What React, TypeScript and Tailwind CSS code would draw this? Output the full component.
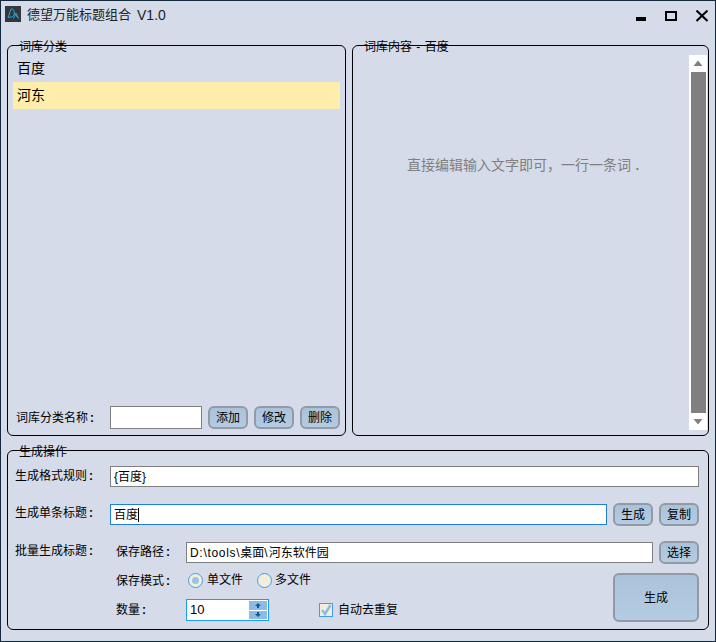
const font = "font-['Liberation_Sans','Noto_Sans_CJK_SC',sans-serif]";

function Btn({ label, className = "w-10 h-[23px]" }: { label: string; className?: string }) {
  return (
    <button className={`${className} shrink-0 rounded-md border-2 border-[#929ba5] bg-[linear-gradient(#abc3da,#b3cce3)] text-[12px] leading-none text-black`}>
      {label}
    </button>
  );
}

function Group({ title, className, children }: { title: React.ReactNode; className: string; children: React.ReactNode }) {
  return (
    <div className={`relative rounded-md border border-black ${className}`}>
      <span className="absolute left-[11px] top-[-6px] text-[12px] leading-[14px] text-black">{title}</span>
      {children}
    </div>
  );
}

function Field({ value, className, caret }: { value: React.ReactNode; className: string; caret?: boolean }) {
  return (
    <div className={`flex items-center bg-white pl-[3px] text-[12px] text-black ${className}`}>
      {value}
      {caret && <span className="h-[14px] w-px bg-black" />}
    </div>
  );
}

function Label({ text, className }: { text: string; className: string }) {
  return (
    <span className={`shrink-0 text-[12px] ${className}`}>
      {text}
      <span className="ml-[2px] font-bold">:</span>
    </span>
  );
}

export default function App() {
  const items = ["百度", "河东"];

  return (
    <div className={`${font} flex h-[642px] w-[716px] flex-col overflow-hidden border border-[#12293b] bg-[#d5dbe9] text-black`}>
      {/* title bar */}
      <div className="flex h-[29px] shrink-0 items-center pl-[4px]">
        <svg width="16" height="16" viewBox="0 0 16 16" className="mb-[4px]">
          <rect width="16" height="16" fill="#33373c" />
          <path d="M3 12 L6 3 L7.5 3 C10 4 10 9 7.5 10.5 L3.5 11.5 M8.5 12.5 L11 7 L13.5 12.5 M9 6.5 L13 12" fill="none" stroke="#2aa3d8" strokeWidth="1" />
        </svg>
        <span className="mb-[1px] ml-[6px] text-[13px] text-[#222]">德望万能标题组合</span>
        <span className="mb-[1px] ml-[6px] text-[14px] text-[#222]">V1.0</span>
        <div className="ml-auto flex items-center">
          <svg width="12" height="12" viewBox="0 0 12 12" className="mr-[17px]">
            <rect x="0" y="7" width="10" height="4" fill="#000" />
          </svg>
          <svg width="12" height="12" viewBox="0 0 12 12" className="mr-[19px]">
            <rect x="1" y="2" width="10" height="8" fill="none" stroke="#000" strokeWidth="2" />
          </svg>
          <svg width="12" height="12" viewBox="0 0 12 12" className="mr-[7px]">
            <path d="M0.5 0.5 L11.5 11 M11.5 0.5 L0.5 11" stroke="#000" strokeWidth="2" />
          </svg>
        </div>
      </div>

      {/* top panels */}
      <div className="mt-[15px] flex h-[391px] shrink-0 gap-[6px] pl-[6px]">
        <Group title="词库分类" className="flex w-[339px] flex-col px-[5px] pt-[9px] pb-[6px]">
          <div className="flex-1">
            {items.map((item, i) => (
              <div
                key={item}
                className={`flex h-[27px] w-[327px] items-center pl-[4px] text-[14px] ${i === 1 ? "bg-[#fdeeab]" : ""}`}
              >
                {item}
              </div>
            ))}
          </div>
          <div className="flex items-center pl-[3px]">
            <Label text="词库分类名称" className="w-[94px]" />
            <Field value="" className="h-[23px] w-[92px] border border-[#808080]" />
            <div className="ml-[6px] flex gap-[6px]">
              <Btn label="添加" />
              <Btn label="修改" />
              <Btn label="删除" />
            </div>
          </div>
        </Group>

        <Group
          title={
            <>
              词库内容 <span className="mx-[1px]">-</span> 百度
            </>
          }
          className="flex w-[357px]"
        >
          <div className="flex-1 pt-[107px] pl-[54px]">
            <span className="text-[14px] leading-[20px] text-[#808080]">
              直接编辑输入文字即可，一行一条词<span className="ml-[3px]">．</span>
            </span>
          </div>
          <div className="mt-[9px] mr-[1px] mb-[5px] flex w-[18px] flex-col items-center bg-white">
            <svg width="10" height="17" viewBox="0 0 10 17"><path d="M0.5 11 L5 5.5 L9.5 11 Z" fill="#808080" /></svg>
            <div className="w-[15px] flex-1 bg-[#808080]" />
            <svg width="10" height="17" viewBox="0 0 10 17"><path d="M0.5 6 L5 11.5 L9.5 6 Z" fill="#808080" /></svg>
          </div>
        </Group>
      </div>

      {/* generate */}
      <div className="mt-[14px] pl-[6px]">
        <Group title="生成操作" className="flex h-[180px] w-[702px] flex-col pl-[7px] pr-[9px] pt-[15px]">
          <div className="flex h-[21px] items-center">
            <Label text="生成格式规则" className="mb-[2px] w-[95px]" />
            <Field value="{百度}" className="h-[21px] flex-1 border border-[#808080]" />
          </div>

          <div className="mt-[16px] flex h-[23px] items-center">
            <Label text="生成单条标题" className="mb-[4px] w-[95px]" />
            <Field value="百度" caret className="h-[21px] w-[497px] border border-[#1e7fd6]" />
            <div className="ml-[6px] flex gap-[6px]">
              <Btn label="生成" />
              <Btn label="复制" />
            </div>
          </div>

          <div className="mt-[15px] flex">
            <Label text="批量生成标题" className="mt-[2px] w-[101px] leading-[17px]" />
            <div className="flex flex-1 flex-col">
              <div className="flex h-[23px] items-center">
                <Label text="保存路径" className="mb-[2px] w-[70px]" />
                <Field
                  value={
                    <>
                      <span className="tracking-[0.7px]">D:\tools\</span>桌面<span className="tracking-[1px]">\</span>河东软件园
                    </>
                  }
                  className="h-[21px] w-[467px] border border-[#808080]"
                />
                <Btn label="选择" className="ml-[6px] h-[23px] w-10" />
              </div>
              <div className="flex items-start">
                <div className="flex-1">
                  <div className="mt-[6px] flex h-[20px] items-center">
                    <Label text="保存模式" className="mt-[2px] w-[72px]" />
                    <span className="flex h-[15px] w-[15px] items-center justify-center rounded-full border border-[#3f9cf0] bg-[#f3eedc]">
                      <span className="h-[7px] w-[7px] rounded-full bg-[#9cc3e6]" />
                    </span>
                    <span className="ml-[4px] text-[12px]">单文件</span>
                    <span className="ml-[14px] h-[15px] w-[15px] rounded-full border border-[#3f9cf0] bg-[#f3eedc]" />
                    <span className="ml-[3px] text-[12px]">多文件</span>
                  </div>
                  <div className="mt-[9px] flex h-[22px] items-center">
                    <Label text="数量" className="w-[70px]" />
                    <div className="flex h-[22px] w-[83px] items-center justify-between border border-[#1e9bf5] bg-white pl-[3px] text-[13px]">
                      10
                      <div className="flex h-full w-[19px] flex-col gap-[1px] py-[1px] pr-[1px]">
                        <div className="flex flex-1 items-center justify-center bg-[#8dbbe8]">
                          <svg width="6" height="5" viewBox="0 0 6 5"><path d="M3 0 L6 3 L4 3 L4 5 L2 5 L2 3 L0 3 Z" fill="#0f5a96" /></svg>
                        </div>
                        <div className="flex flex-1 items-center justify-center bg-[#8dbbe8]">
                          <svg width="6" height="5" viewBox="0 0 6 5"><path d="M2 0 L4 0 L4 2 L6 2 L3 5 L0 2 L2 2 Z" fill="#0f5a96" /></svg>
                        </div>
                      </div>
                    </div>
                    <span className="ml-[50px] flex h-[14px] w-[14px] items-center justify-center border border-[#3f9cf0] bg-[#f3eedc]">
                      <svg width="12" height="12" viewBox="0 0 12 12"><path d="M2 6 L5 10 L10.5 1" fill="none" stroke="#8fbbe3" strokeWidth="2.5" /></svg>
                    </span>
                    <span className="ml-[5px] text-[12px]">自动去重复</span>
                  </div>
                </div>
                <Btn label="生成" className="mt-[9px] h-[49px] w-[86px]" />
              </div>
            </div>
          </div>
        </Group>
      </div>
    </div>
  );
}
